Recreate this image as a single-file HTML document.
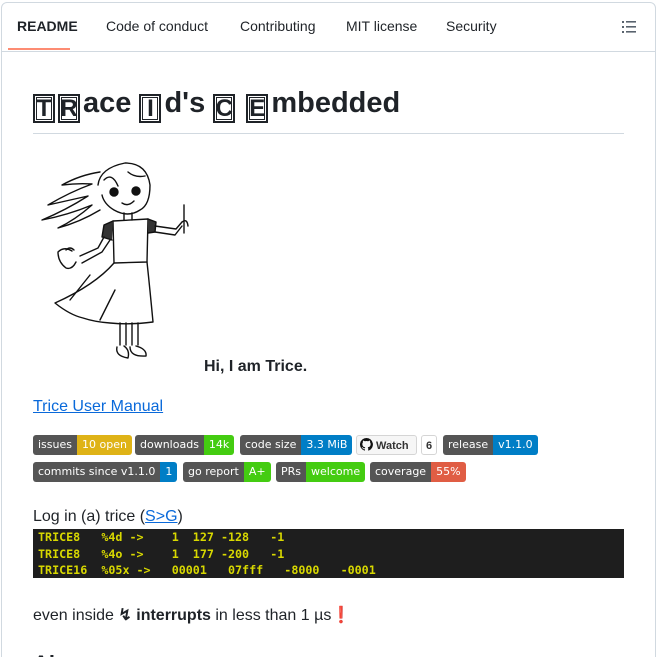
<!DOCTYPE html>
<html><head><meta charset="utf-8"><style>
*{margin:0;padding:0;box-sizing:border-box}
html,body{width:657px;height:657px;overflow:hidden}
body{background:#fff;font-family:"Liberation Sans",sans-serif;color:#1f2328;position:relative}
.card{position:absolute;left:1px;top:2px;width:655px;height:700px;border:1px solid #d1d9e0;border-radius:6px}
.tabs{position:absolute;left:0;top:0;width:100%;height:49px;border-bottom:1px solid #d1d9e0}
.tab{position:absolute;top:15px;font-size:14px;color:#1f2328}
.ab{position:absolute}
h1{position:absolute;left:33px;top:87px;font-size:29px;font-weight:bold;white-space:nowrap;line-height:33px}
.bx{display:inline-block;border:2px solid #1f2328;width:22px;height:29px;line-height:25px;text-align:center;font-size:24px;vertical-align:-4px;margin-right:3px;position:relative}
.bx::after{content:"";position:absolute;left:1px;top:1px;right:1px;bottom:1px;border:1px solid #1f2328}
.badge{position:absolute;height:20px;display:flex;border-radius:3px;overflow:hidden;font-family:"DejaVu Sans",sans-serif;font-size:11px;color:#fff;line-height:20px}
.badge span{padding:0 5px;white-space:nowrap}
.l{background:#555}
pre{position:absolute;left:33px;top:529px;width:591px;height:49px;background:#1e1e1e;color:#d8d800;font-family:"DejaVu Sans Mono",monospace;font-weight:bold;font-size:11.7px;line-height:16.5px;padding:0 5px;white-space:pre}
</style></head><body>
<div class="card">
<div class="tabs">
<div class="tab" style="left:15px;font-weight:bold">README</div>
<div class="ab" style="left:6px;top:45px;width:62px;height:2px;background:#fd8c73"></div>
<div class="tab" style="left:104px">Code of conduct</div>
<div class="tab" style="left:238px">Contributing</div>
<div class="tab" style="left:344px">MIT license</div>
<div class="tab" style="left:444px">Security</div>
<svg class="ab" style="left:620px;top:17px" width="16" height="14"><g fill="#59636e"><rect x="0" y="1" width="2" height="2"/><rect x="0" y="6" width="2" height="2"/><rect x="0" y="11" width="2" height="2"/><rect x="4" y="1" width="10" height="1.6"/><rect x="4" y="6" width="10" height="1.6"/><rect x="4" y="11" width="10" height="1.6"/></g></svg>
</div>
</div>
<h1><span class="bx">T</span><span class="bx">R</span>ace <span class="bx">I</span>d's <span class="bx">C</span> <span class="bx">E</span>mbedded</h1>
<div class="ab" style="left:33px;top:133px;width:591px;height:1px;background:#d1d9e0"></div>
<svg class="ab" style="left:0;top:0" width="657" height="400" fill="none" stroke="#111" stroke-width="1.4" stroke-linejoin="round" stroke-linecap="round">
<path d="M98 185 Q100 168 125 163 Q147 163 150 185 Q150 205 140 210 Q128 218 114 210 Q104 204 102 195"/>
<path d="M100 172 Q80 175 62 185 Q78 183 92 184 Q70 192 48 205 Q70 200 88 196 Q66 210 42 220 Q68 215 92 205 Q75 220 58 228 Q80 222 100 210"/>
<path d="M104 180 Q112 172 118 186 M128 172 Q135 178 145 176"/>
<circle cx="114" cy="192" r="4" fill="#111"/><circle cx="136" cy="191" r="4" fill="#111"/>
<path d="M122 203 Q128 207 134 201"/>
<path d="M124 213 L124 220 M132 213 L132 220"/>
<path d="M113 221 L148 219 L147 262 L114 263 Z"/>
<path d="M113 221 L104 225 L102 237 L112 240 M148 219 L156 222 L155 232 L148 233" fill="#333"/>
<path d="M104 237 L98 248 L80 256 M110 240 L102 252 L82 263"/>
<path d="M72 251 Q64 246 58 252 Q58 262 66 268 Q72 270 76 262 M66 250 Q70 246 74 250"/>
<path d="M155 232 L175 235 L182 226 M155 226 L176 229 L182 222"/>
<path d="M184 205 L184 233 M182 222 Q187 218 188 226"/>
<path d="M114 263 Q95 285 55 303 Q70 315 83 318 Q95 322 110 323 Q130 325 153 322 Q150 290 147 262"/>
<path d="M90 275 L70 300 M115 290 L100 320"/>
<path d="M120 323 L120 345 M126 323 L126 345 M132 323 L132 345 M138 323 L138 345"/>
<path d="M117 347 Q115 356 128 358 Q130 350 124 346 M130 347 Q130 357 146 356 Q147 349 136 346"/>
</svg>
<div class="ab" style="left:204px;top:358px;font-size:16px;font-weight:bold">Hi, I am Trice.</div>
<div class="ab" style="left:33px;top:398px;font-size:16px;color:#0969da;text-decoration:underline">Trice User Manual</div>
<div class="badge" style="left:33px;top:435px"><span class="l">issues</span><span style="background:#dfb317">10 open</span></div>
<div class="badge" style="left:135px;top:435px"><span class="l">downloads</span><span style="background:#4c1">14k</span></div>
<div class="badge" style="left:240px;top:435px"><span class="l">code size</span><span style="background:#007ec6">3.3 MiB</span></div>
<div class="badge" style="left:356px;top:435px;width:61px;border:1px solid #d5d5d5;background:#f6f6f6;color:#333;font-weight:bold;font-family:'Liberation Sans',sans-serif"><span style="padding:0 3px"><svg width="13" height="13" viewBox="0 0 16 16" style="vertical-align:-2px"><path fill="#111" d="M8 0a8 8 0 0 0-2.5 15.6c.4 0 .5-.2.5-.4v-1.5c-2.2.5-2.7-1-2.7-1-.4-.9-.9-1.2-.9-1.2-.7-.5.1-.5.1-.5.8.1 1.2.8 1.2.8.7 1.3 1.9.9 2.3.7.1-.5.3-.9.5-1.1-1.8-.2-3.6-.9-3.6-4 0-.9.3-1.6.8-2.1-.1-.2-.4-1 .1-2.1 0 0 .7-.2 2.2.8a7.400 7.400 0 0 1 4 0c1.5-1 2.2-.8 2.2-.8.4 1.1.2 1.900.1 2.1.5.6.8 1.300.8 2.100 0 3.100-1.900 3.800-3.600 4 .3.3.6.8.6 1.500v2.200c0 .2.1.5.6.4A8 8 0 0 0 8 0z"/></svg> Watch</span></div>
<div class="badge" style="left:421px;top:435px;width:16px;border:1px solid #d5d5d5;background:#fff;color:#333;font-weight:bold;justify-content:center;font-family:'Liberation Sans',sans-serif">6</div>
<div class="badge" style="left:443px;top:435px"><span class="l">release</span><span style="background:#007ec6">v1.1.0</span></div>
<div class="badge" style="left:33px;top:462px"><span class="l">commits since v1.1.0</span><span style="background:#007ec6">1</span></div>
<div class="badge" style="left:183px;top:462px"><span class="l">go report</span><span style="background:#4c1">A+</span></div>
<div class="badge" style="left:276px;top:462px"><span class="l">PRs</span><span style="background:#4c1">welcome</span></div>
<div class="badge" style="left:370px;top:462px"><span class="l">coverage</span><span style="background:#e05d44">55%</span></div>
<div class="ab" style="left:33px;top:508px;font-size:16px">Log in (a) trice (<span style="color:#0969da;text-decoration:underline">S&gt;G</span>)</div>
<pre>TRICE8   %4d ->    1  127 -128   -1
TRICE8   %4o ->    1  177 -200   -1
TRICE16  %05x ->   00001   07fff   -8000   -0001</pre>
<div class="ab" style="left:33px;top:605px;font-size:16px;white-space:nowrap">even inside <b>↯ interrupts</b> in less than 1 µs<span style="color:#e33">❗</span></div>
<div class="ab" style="left:33px;top:651px;font-size:22px;font-weight:bold">Ab</div>
</body></html>
